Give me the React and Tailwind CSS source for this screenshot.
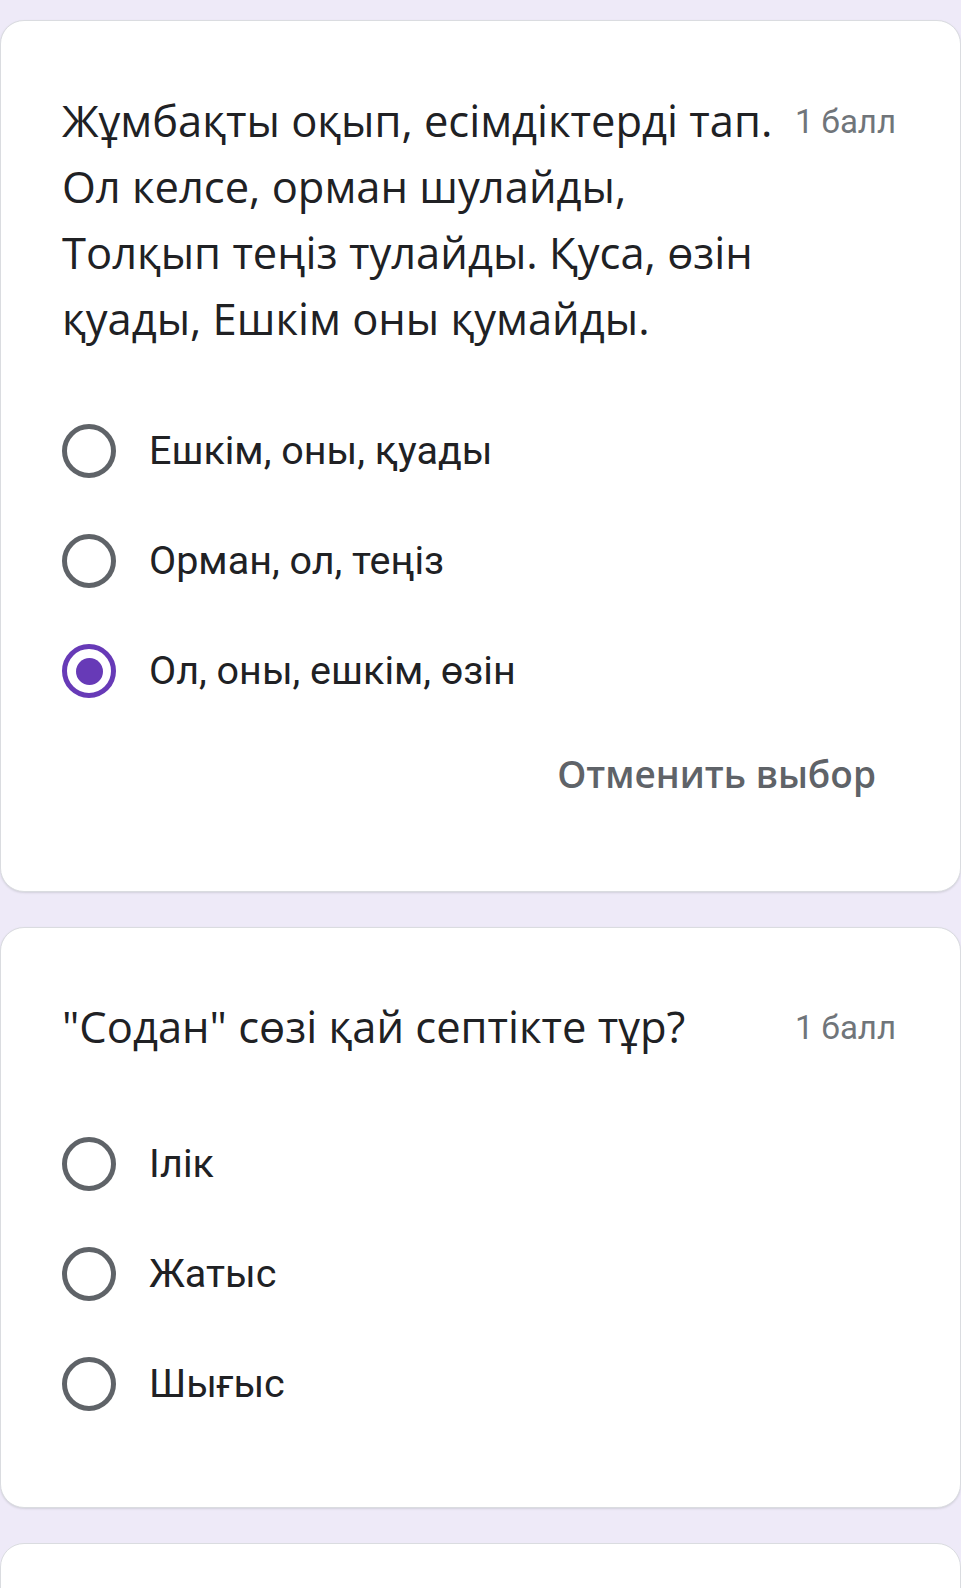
import React from "react";

const font = { fontFamily: "Roboto, 'Noto Sans', sans-serif" };
const sans = { fontFamily: "'Open Sans', Roboto, sans-serif" };

const Radio = ({ checked }) =>
  checked ? (
    <span className="flex h-[54px] w-[54px] shrink-0 items-center justify-center rounded-full border-[5px] border-[#673ab7]">
      <span className="h-[27px] w-[27px] rounded-full bg-[#673ab7]" />
    </span>
  ) : (
    <span className="h-[54px] w-[54px] shrink-0 rounded-full border-[5px] border-[#5f6368]" />
  );

const Option = ({ label, checked }) => (
  <label className="flex h-[110px] items-center gap-[33px]">
    <Radio checked={checked} />
    <span className="text-[39.5px] text-[#202124]">{label}</span>
  </label>
);

const Card = ({ lines, options, selected, clear, className }) => (
  <section
    className={`rounded-[24px] border border-[#dadce0] bg-white pl-[61px] pr-[64px] shadow-[0_1px_2px_rgba(60,64,67,0.15)] ${className}`}
  >
    <div className="flex items-start justify-between">
      <div className="text-[43.5px] leading-[66px] text-[#202124]" style={sans}>
        {lines.map((l) => (
          <div key={l}>{l}</div>
        ))}
      </div>
      <span className="shrink-0 pt-[1px] text-[33px] leading-[66px] text-[#70757a]">1 балл</span>
    </div>
    <div className="flex flex-col">
      {options.map((o, i) => (
        <Option key={o} label={o} checked={i === selected} />
      ))}
    </div>
    {clear && (
      <div className="mt-[20px] flex justify-end">
        <button
          className="mr-[20px] h-[50px] text-[37px] font-semibold text-[#5f6368]"
          style={sans}
        >
          Отменить выбор
        </button>
      </div>
    )}
  </section>
);

export default function App() {
  return (
    <main className="min-h-[1588px] bg-[#eeeaf8] pt-[20px]" style={font}>
      <Card
        className="pt-[67px] pb-[95px] [&>div:nth-child(2)]:mt-[44px]"
        lines={[
          "Жұмбақты оқып, есімдіктерді тап.",
          "Ол келсе, орман шулайды,",
          "Толқып теңіз тулайды. Қуса, өзін",
          "қуады, Ешкім оны қумайды.",
        ]}
        options={["Ешкім, оны, қуады", "Орман, ол, теңіз", "Ол, оны, ешкім, өзін"]}
        selected={2}
        clear
      />
      <Card
        className="mt-[35px] pt-[66px] pb-[68px] [&>div:nth-child(2)]:mt-[48px]"
        lines={['"Содан" сөзі қай септікте тұр?']}
        options={["Ілік", "Жатыс", "Шығыс"]}
        selected={-1}
      />
      <section className="mt-[35px] h-[60px] rounded-t-[24px] border border-[#dadce0] bg-white" />
    </main>
  );
}
